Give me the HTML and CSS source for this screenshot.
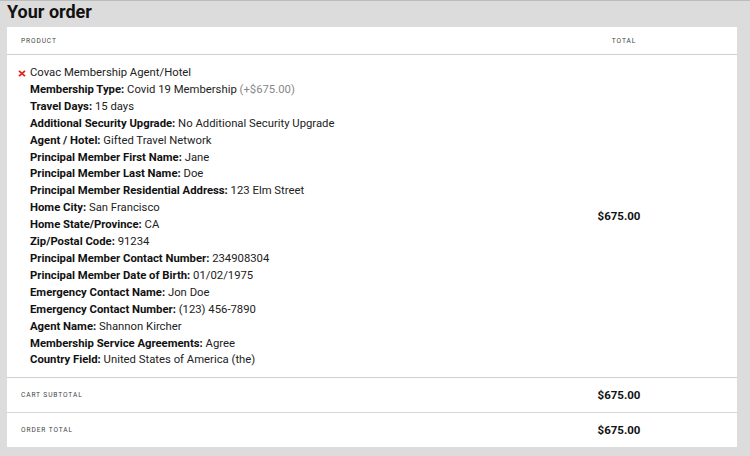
FILE: index.html
```html
<!DOCTYPE html>
<html>
<head>
<meta charset="utf-8">
<link rel="stylesheet" href="styles.css">
</head>
<body>
<h3 class="title">Your order</h3>
<table class="order">
  <thead>
    <tr>
      <th class="col-product">Product</th>
      <th class="col-total">Total</th>
    </tr>
  </thead>
  <tbody>
    <tr class="item">
      <td class="col-product">
        <div class="line name"><svg class="remove" width="8" height="7" viewBox="0 0 8 7"><path d="M1 0.8 L7 6.2 M7 0.8 L1 6.2" stroke="#e1251b" stroke-width="1.8" fill="none"/></svg>Covac Membership Agent/Hotel</div>
        <div class="line"><b>Membership Type:</b> Covid 19 Membership <span class="muted">(+$675.00)</span></div>
        <div class="line"><b>Travel Days:</b> 15 days</div>
        <div class="line"><b>Additional Security Upgrade:</b> No Additional Security Upgrade</div>
        <div class="line"><b>Agent / Hotel:</b> Gifted Travel Network</div>
        <div class="line"><b>Principal Member First Name:</b> Jane</div>
        <div class="line"><b>Principal Member Last Name:</b> Doe</div>
        <div class="line"><b>Principal Member Residential Address:</b> 123 Elm Street</div>
        <div class="line"><b>Home City:</b> San Francisco</div>
        <div class="line"><b>Home State/Province:</b> CA</div>
        <div class="line"><b>Zip/Postal Code:</b> 91234</div>
        <div class="line"><b>Principal Member Contact Number:</b> 234908304</div>
        <div class="line"><b>Principal Member Date of Birth:</b> 01/02/1975</div>
        <div class="line"><b>Emergency Contact Name:</b> Jon Doe</div>
        <div class="line"><b>Emergency Contact Number:</b> (123) 456-7890</div>
        <div class="line"><b>Agent Name:</b> Shannon Kircher</div>
        <div class="line"><b>Membership Service Agreements:</b> Agree</div>
        <div class="line"><b>Country Field:</b> United States of America (the)</div>
      </td>
      <td class="col-total amount">$675.00</td>
    </tr>
  </tbody>
  <tfoot>
    <tr class="sum">
      <th class="col-product">Cart Subtotal</th>
      <td class="col-total amount">$675.00</td>
    </tr>
    <tr class="sum">
      <th class="col-product">Order Total</th>
      <td class="col-total amount">$675.00</td>
    </tr>
  </tfoot>
</table>
</body>
</html>
```
FILE: styles.css
```css
html, body {
  margin: 0;
  padding: 0;
}
body {
  background: #dcdcdc;
  font-family: Roboto, "Liberation Sans", sans-serif;
  color: #222;
  border-top: 1px solid #bcbcbc;
  padding: 0 13px 0 7px;
}
.title {
  margin: 0;
  font-size: 18px;
  line-height: 21px;
  font-weight: 700;
  color: #111;
}
.order {
  margin-top: 5px;
  width: 730px;
  background: #fff;
  border-collapse: collapse;
}
.order th {
  font-weight: 400;
  text-transform: uppercase;
  font-size: 6.6px;
  letter-spacing: 0.9px;
  color: #444;
  text-align: left;
}
thead th {
  height: 27px;
  padding: 0 0 0 14px;
  border-bottom: 1px solid #cfcfcf;
}
thead th.col-total {
  text-align: center;
  padding: 0 0 0 12px;
}
.col-total {
  width: 226px;
}
.item td {
  padding: 10px 0 7.5px 11px;
  border-bottom: 1px solid #cfcfcf;
  vertical-align: middle;
}
.item td.amount {
  padding: 0 0 0 2px;
}
.line {
  font-size: 11.3px;
  line-height: 16.9px;
  padding-left: 12px;
  color: #222;
  white-space: nowrap;
}
.line b {
  font-weight: 700;
  color: #111;
}
.line.name {
  padding-left: 0;
}
.remove {
  display: inline-block;
  vertical-align: -1px;
  margin-right: 4px;
}
.muted {
  color: #888;
}
.amount {
  font-size: 11.5px;
  font-weight: 700;
  color: #111;
  text-align: center;
}
.sum th, .sum td {
  height: 34px;
  padding: 0;
  vertical-align: middle;
}
.sum td.amount {
  padding-left: 2px;
}
.sum th {
  padding-left: 14px;
}
.sum + .sum th, .sum + .sum td {
  border-top: 1px solid #d6d6d6;
}
```
